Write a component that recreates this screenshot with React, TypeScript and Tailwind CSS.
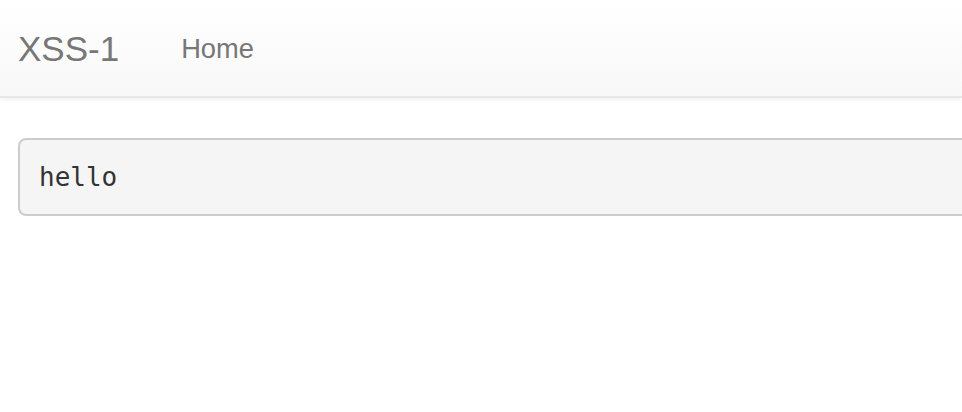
export default function App() {
  return (
    <div className="min-h-screen w-full overflow-hidden bg-white font-['Liberation_Sans',Arial,sans-serif]">
      <nav className="flex h-[98px] items-center border-b-2 border-[#e7e7e7] bg-gradient-to-b from-white to-[#f8f8f8] shadow-[0_1px_5px_rgba(0,0,0,0.075)]">
        <a className="pl-[18px] text-[35px] leading-[39px] text-[#777]">XSS-1</a>
        <ul className="ml-[62px] flex">
          <li>
            <a className="text-[27.3px] leading-[39px] text-[#777]">Home</a>
          </li>
        </ul>
      </nav>
      <main className="pl-[18px] pt-[40px]">
        <pre className="w-[1000px] rounded-[8px] border-2 border-[#ccc] bg-[#f5f5f5] px-[19px] py-[19px] font-['DejaVu_Sans_Mono',monospace] text-[26px] leading-[36px] text-[#333]">
          hello
        </pre>
      </main>
    </div>
  );
}
